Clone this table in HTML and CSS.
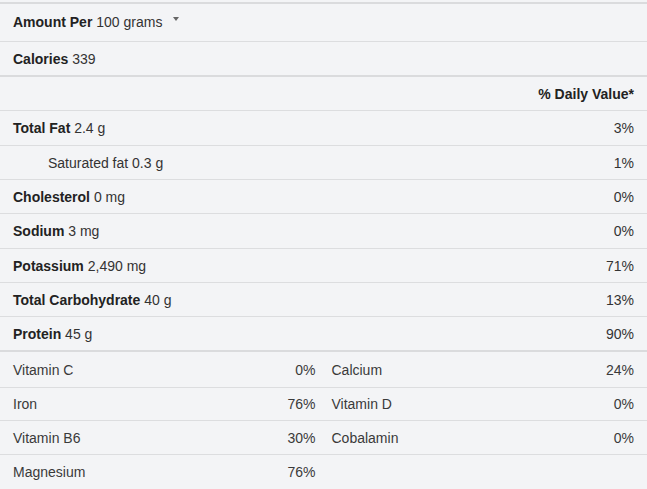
FILE: index.html
```html
<!DOCTYPE html>
<html>
<head>
<meta charset="utf-8">
<link rel="stylesheet" href="styles.css">
</head>
<body>
<div class="facts">
  <div class="row row-amount">
    <span><b>Amount Per</b> 100 grams</span>
    <span class="caret"></span>
  </div>
  <div class="row tall thick"><span><b>Calories</b> 339</span></div>
  <div class="row"><span class="spacer"></span><b>% Daily Value*</b></div>
  <div class="row tall"><span><b>Total Fat</b> 2.4 g</span><span>3%</span></div>
  <div class="row"><span class="indent">Saturated fat 0.3 g</span><span>1%</span></div>
  <div class="row"><span><b>Cholesterol</b> 0 mg</span><span>0%</span></div>
  <div class="row tall"><span><b>Sodium</b> 3 mg</span><span>0%</span></div>
  <div class="row"><span><b>Potassium</b> 2,490 mg</span><span>71%</span></div>
  <div class="row"><span><b>Total Carbohydrate</b> 40 g</span><span>13%</span></div>
  <div class="row tall thick"><span><b>Protein</b> 45 g</span><span>90%</span></div>
  <div class="vit-row first">
    <div class="vit"><span>Vitamin C</span><span>0%</span></div>
    <div class="vit"><span>Calcium</span><span>24%</span></div>
  </div>
  <div class="vit-row short">
    <div class="vit"><span>Iron</span><span>76%</span></div>
    <div class="vit"><span>Vitamin D</span><span>0%</span></div>
  </div>
  <div class="vit-row">
    <div class="vit"><span>Vitamin B6</span><span>30%</span></div>
    <div class="vit"><span>Cobalamin</span><span>0%</span></div>
  </div>
  <div class="vit-row last">
    <div class="vit"><span>Magnesium</span><span>76%</span></div>
    <div class="vit"></div>
  </div>
</div>
</body>
</html>
```
FILE: styles.css
```css
html, body {
  margin: 0;
  padding: 0;
  background: #f3f4f6;
}
body {
  font-family: "Liberation Sans", Arial, sans-serif;
  font-size: 14px;
  color: #333;
  padding-top: 2px;
}
b { color: #222; font-weight: bold; }
.facts {
  border-top: 2px solid #dadbdd;
}
.row {
  box-sizing: border-box;
  display: flex;
  align-items: center;
  justify-content: space-between;
  height: 34px;
  padding: 0 13px;
  border-bottom: 1px solid #dcdddf;
}
.row.tall { height: 35px; }
.row-amount {
  height: 38px;
  justify-content: flex-start;
  padding-bottom: 2px;
}
.thick { border-bottom: 2px solid #dadbdd; }
.caret {
  width: 0;
  height: 0;
  margin-left: 11px;
  margin-top: -6px;
  border-left: 3.5px solid transparent;
  border-right: 3.5px solid transparent;
  border-top: 4px solid #666;
}
.indent { padding-left: 35px; }
.vit-row {
  box-sizing: border-box;
  display: grid;
  grid-template-columns: 1fr 1fr;
  column-gap: 16px;
  padding: 0 13px;
  height: 34px;
  border-bottom: 1px solid #dcdddf;
  color: #3a3a3a;
}
.vit-row.first { height: 36px; }
.vit-row.short { height: 33px; }
.vit-row.last { border-bottom: none; height: 34px; }
.vit {
  display: flex;
  align-items: center;
  justify-content: space-between;
}
```
